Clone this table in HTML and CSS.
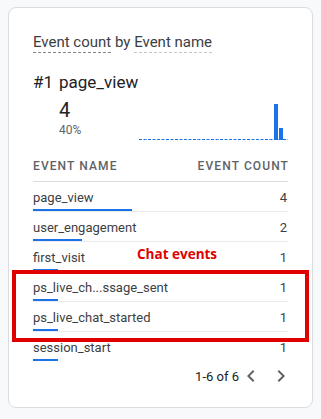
FILE: index.html
```html
<!DOCTYPE html>
<html lang="en">
<head>
<meta charset="utf-8">
<title>Event count by Event name</title>
<link rel="stylesheet" href="styles.css">
</head>
<body>
<div class="card">
  <div class="title">
    <span class="dim dim-strong">Event count</span> by <span class="dim dim-light">Event name</span>
  </div>

  <div class="top">
    <span class="rank">#1</span><span class="top-name">page_view</span>
  </div>
  <div class="summary">
    <div class="stats">
      <div class="big">4</div>
      <div class="pct">40%</div>
    </div>
    <svg class="spark" width="150" height="36" viewBox="0 0 150 36">
      <line x1="0" y1="35.5" x2="149" y2="35.5" stroke="#1a73e8" stroke-width="1" stroke-dasharray="3 1.5"/>
      <rect x="135" y="0" width="4" height="36" fill="#1a73e8"/>
      <rect x="140" y="24" width="4" height="12" fill="#1a73e8"/>
    </svg>
  </div>

  <div class="thead">
    <span>EVENT NAME</span>
    <span>EVENT COUNT</span>
  </div>

  <div class="row">
    <div class="name"><span class="label">page_view</span><span class="bar" style="width:40%"></span></div>
    <span class="count">4</span>
  </div>
  <div class="row">
    <div class="name"><span class="label">user_engagement</span><span class="bar" style="width:20%"></span></div>
    <span class="count">2</span>
  </div>
  <div class="row">
    <div class="name"><span class="label">first_visit</span><span class="bar" style="width:10%"></span></div>
    <span class="count">1</span>
  </div>
  <div class="row">
    <div class="name"><span class="label">ps_live_ch...ssage_sent</span><span class="bar" style="width:10%"></span></div>
    <span class="count">1</span>
  </div>
  <div class="row">
    <div class="name"><span class="label">ps_live_chat_started</span><span class="bar" style="width:10%"></span></div>
    <span class="count">1</span>
  </div>
  <div class="row last">
    <div class="name"><span class="label">session_start</span><span class="bar" style="width:10%"></span></div>
    <span class="count">1</span>
  </div>

  <div class="pager">
    <span class="range">1-6 of 6</span>
    <svg class="chev" width="24" height="24" viewBox="0 0 24 24"><path d="M15.41 7.41L14 6l-6 6 6 6 1.41-1.41L10.83 12z" fill="#5f6368"/></svg>
    <svg class="chev next" width="24" height="24" viewBox="0 0 24 24"><path d="M10 6L8.59 7.41 13.17 12l-4.58 4.59L10 18l6-6z" fill="#5f6368"/></svg>
  </div>

  <div class="highlight"></div>
  <div class="note">Chat events</div>
</div>
</body>
</html>
```

FILE: styles.css
```css
html, body {
  margin: 0;
  padding: 0;
}
body {
  background: #f8f9fa;
  padding: 7px 8px 0;
  font-family: Roboto, "Liberation Sans", Arial, sans-serif;
  color: #3c4043;
}
.card {
  position: relative;
  box-sizing: border-box;
  width: 305px;
  background: #fff;
  border: 1px solid #dadce0;
  border-radius: 8px;
  padding: 24px 24px 19px;
}
.title {
  font-size: 15px;
  line-height: 20px;
  height: 21px;
  color: #3c4043;
  margin-bottom: 17px;
}
.dim {
  display: inline-block;
  line-height: 20px;
  border-bottom: 1px dashed #80868b;
}
.dim-light {
  border-bottom-color: #c4c7cb;
}
.top {
  display: flex;
  font-size: 17px;
  line-height: 24px;
  color: #202124;
}
.rank {
  width: 26px;
}
.summary {
  display: flex;
  align-items: flex-end;
  justify-content: space-between;
  padding-left: 26px;
  margin-top: 4px;
}
.big {
  font-size: 20px;
  line-height: 24px;
  color: #202124;
}
.pct {
  font-size: 12px;
  line-height: 16px;
  color: #5f6368;
}
.spark {
  display: block;
  margin-bottom: -2px;
  margin-right: -1px;
}
.thead {
  display: flex;
  justify-content: space-between;
  margin-top: 20px;
  padding-bottom: 7px;
  border-bottom: 1px solid #dadce0;
  font-size: 12px;
  line-height: 16px;
  letter-spacing: 1.1px;
  color: #5f6368;
  font-weight: 500;
}
.thead span:last-child {
  margin-right: -1px;
}
.row {
  display: flex;
  justify-content: space-between;
  align-items: flex-start;
  padding-top: 8px;
  border-bottom: 1px solid #e8eaed;
  font-size: 13px;
  line-height: 16px;
}
.row.last {
  border-bottom: none;
}
.name {
  flex: 1;
  display: flex;
  flex-direction: column;
}
.label {
  color: #3c4043;
}
.bar {
  display: block;
  height: 2px;
  margin-top: 3px;
  background: #1a73e8;
}
.count {
  color: #3c4043;
  margin-right: 1px;
}
.pager {
  display: flex;
  align-items: center;
  justify-content: flex-end;
  margin-top: 3px;
  margin-right: -5px;
  height: 24px;
  font-size: 13px;
  color: #202124;
}
.chev {
  display: block;
}
.chev.next {
  margin-left: 6px;
}
.highlight {
  position: absolute;
  left: 3px;
  top: 262px;
  width: 297px;
  height: 72px;
  box-sizing: border-box;
  border: 4px solid #e00000;
}
.note {
  position: absolute;
  left: 128px;
  top: 236px;
  font-family: "Open Sans", "Noto Sans", sans-serif;
  font-weight: 700;
  font-size: 13.5px;
  line-height: 20px;
  color: #e00000;
}
```
